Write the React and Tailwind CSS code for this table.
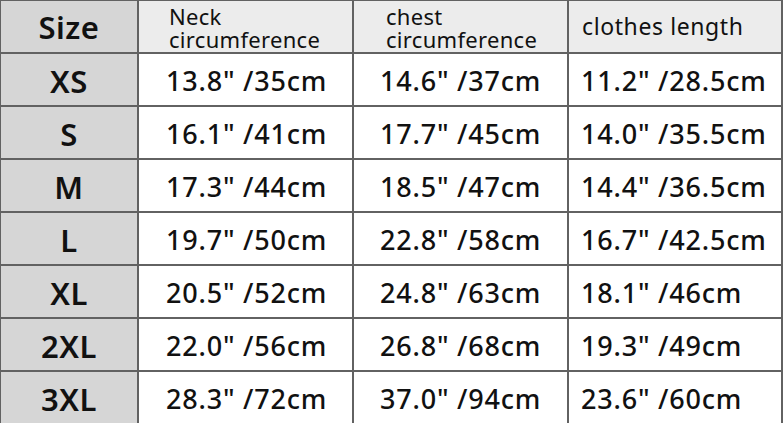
const rows = [
  ["XS", '13.8" /35cm', '14.6" /37cm', '11.2" /28.5cm'],
  ["S", '16.1" /41cm', '17.7" /45cm', '14.0" /35.5cm'],
  ["M", '17.3" /44cm', '18.5" /47cm', '14.4" /36.5cm'],
  ["L", '19.7" /50cm', '22.8" /58cm', '16.7" /42.5cm'],
  ["XL", '20.5" /52cm', '24.8" /63cm', '18.1" /46cm'],
  ["2XL", '22.0" /56cm', '26.8" /68cm', '19.3" /49cm'],
  ["3XL", '28.3" /72cm', '37.0" /94cm', '23.6" /60cm'],
];

const font = { fontFamily: '"Noto Sans", "Open Sans", sans-serif' };

export default function App() {
  return (
    <div className="w-[783px] h-[423px] overflow-hidden bg-white text-[#111]" style={font}>
      <div className="grid grid-cols-[136px_213px_213px_1fr] grid-rows-[51px_51px_51px_51px_51px_51px_51px_51px] gap-[2px] bg-[#626262] pt-[1px] pl-[1px] pr-[2px] pb-[2px]">
        <div className="bg-[#d6d6d6] flex items-center justify-center text-[31px] font-semibold tracking-[0.5px] pt-[2px]">Size</div>
        <div className="bg-[#ececec] flex flex-col justify-center pl-[30px] pt-[2px] text-[22px] leading-[23px] tracking-[0.3px]">
          <span>Neck</span>
          <span>circumference</span>
        </div>
        <div className="bg-[#ececec] flex flex-col justify-center pl-[32px] pt-[2px] text-[22px] leading-[23px] tracking-[0.3px]">
          <span>chest</span>
          <span>circumference</span>
        </div>
        <div className="bg-[#ececec] flex items-center pl-[13px] text-[23px] tracking-[0.6px]">clothes length</div>
        {rows.map((r) => (
          <>
            <div key={r[0] + "s"} className="bg-[#d6d6d6] flex items-center justify-center text-[31px] font-semibold tracking-[0.5px] pt-[3px]">
              {r[0]}
            </div>
            <div key={r[0] + "a"} className="bg-white flex items-center pl-[27px] pt-[3px] text-[27px] font-medium tracking-[0.8px] whitespace-nowrap">
              {r[1]}
            </div>
            <div key={r[0] + "b"} className="bg-white flex items-center pl-[26px] pt-[3px] text-[27px] font-medium tracking-[0.8px] whitespace-nowrap">
              {r[2]}
            </div>
            <div key={r[0] + "c"} className="bg-white flex items-center pl-[12px] pt-[3px] text-[27px] font-medium tracking-[0.8px] whitespace-nowrap">
              {r[3]}
            </div>
          </>
        ))}
      </div>
    </div>
  );
}
